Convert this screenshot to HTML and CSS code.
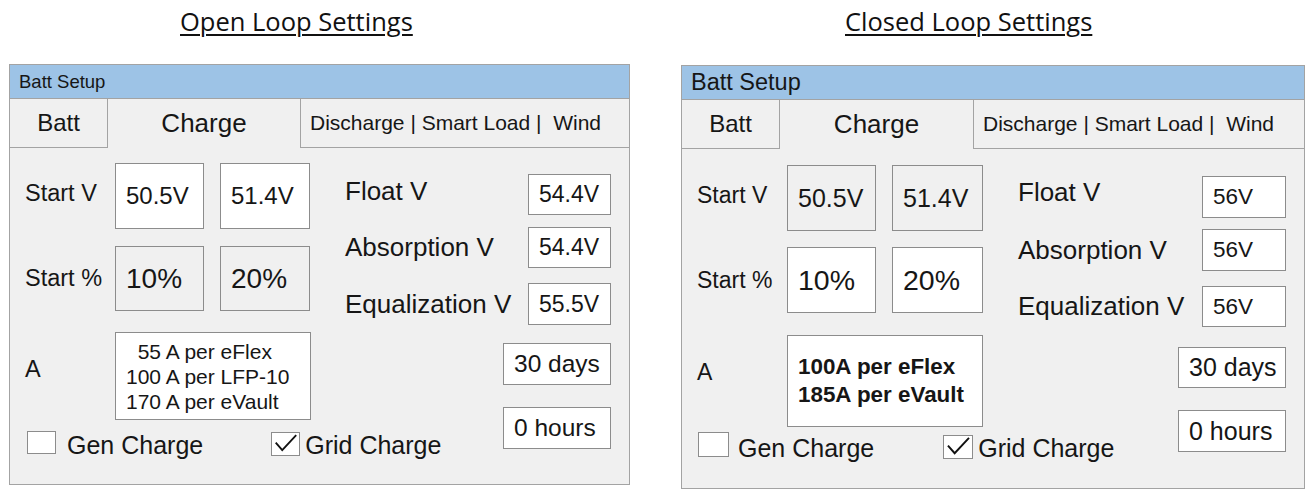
FILE: index.html
```html
<!DOCTYPE html>
<html>
<head>
<meta charset="utf-8">
<link rel="stylesheet" href="styles.css">
</head>
<body>
<div class="page">
  <section class="col open">
    <h2 class="heading">Open Loop Settings</h2>
    <div class="panel">
      <div class="titlebar">Batt Setup</div>
      <div class="tabs">
        <div class="tab tab-batt">Batt</div>
        <div class="tab tab-charge">Charge</div>
        <div class="tab tab-more">Discharge | Smart Load |  Wind</div>
      </div>
      <div class="body">
        <div class="lsec">
          <div class="row r1">
            <span class="lbl">Start V</span>
            <div class="box b1 white vtxt">50.5V</div>
            <div class="box b2 white vtxt">51.4V</div>
          </div>
          <div class="row r2">
            <span class="lbl">Start %</span>
            <div class="box b1 ptxt">10%</div>
            <div class="box b2 ptxt">20%</div>
          </div>
          <div class="row r3">
            <span class="lbl albl">A</span>
            <div class="abox">  55 A per eFlex
100 A per LFP-10
170 A per eVault</div>
          </div>
          <div class="checks">
            <span class="cb cb-gen"></span>
            <span class="ctext">Gen Charge</span>
            <span class="cb cb-grid"><svg viewBox="0 0 29 23" width="100%" height="100%"><polyline points="4,10 11,18 26,2" fill="none" stroke="#111" stroke-width="2"/></svg></span>
            <span class="ctext">Grid Charge</span>
          </div>
        </div>
        <div class="rsec">
          <div class="frow f1"><span class="flbl">Float V</span><div class="vbox">54.4V</div></div>
          <div class="frow f2"><span class="flbl">Absorption V</span><div class="vbox">54.4V</div></div>
          <div class="frow f3"><span class="flbl">Equalization V</span><div class="vbox">55.5V</div></div>
          <div class="frow f4"><div class="vbox wide">30 days</div></div>
          <div class="frow f5"><div class="vbox wide">0 hours</div></div>
        </div>
      </div>
    </div>
  </section>

  <section class="col closed">
    <h2 class="heading">Closed Loop Settings</h2>
    <div class="panel">
      <div class="titlebar">Batt Setup</div>
      <div class="tabs">
        <div class="tab tab-batt">Batt</div>
        <div class="tab tab-charge">Charge</div>
        <div class="tab tab-more">Discharge | Smart Load |  Wind</div>
      </div>
      <div class="body">
        <div class="lsec">
          <div class="row r1">
            <span class="lbl">Start V</span>
            <div class="box b1 vtxt">50.5V</div>
            <div class="box b2 vtxt">51.4V</div>
          </div>
          <div class="row r2">
            <span class="lbl">Start %</span>
            <div class="box b1 white ptxt">10%</div>
            <div class="box b2 white ptxt">20%</div>
          </div>
          <div class="row r3">
            <span class="lbl albl">A</span>
            <div class="abox">100A per eFlex
185A per eVault</div>
          </div>
          <div class="checks">
            <span class="cb cb-gen"></span>
            <span class="ctext">Gen Charge</span>
            <span class="cb cb-grid"><svg viewBox="0 0 29 23" width="100%" height="100%"><polyline points="4,10 11,18 26,2" fill="none" stroke="#111" stroke-width="2"/></svg></span>
            <span class="ctext">Grid Charge</span>
          </div>
        </div>
        <div class="rsec">
          <div class="frow f1"><span class="flbl">Float V</span><div class="vbox">56V</div></div>
          <div class="frow f2"><span class="flbl">Absorption V</span><div class="vbox">56V</div></div>
          <div class="frow f3"><span class="flbl">Equalization V</span><div class="vbox">56V</div></div>
          <div class="frow f4"><div class="vbox wide">30 days</div></div>
          <div class="frow f5"><div class="vbox wide">0 hours</div></div>
        </div>
      </div>
    </div>
  </section>
</div>
</body>
</html>
```

FILE: styles.css
```css
* { box-sizing: border-box; }

body {
  margin: 0;
  background: #ffffff;
  font-family: "Liberation Sans", Arial, sans-serif;
  color: #161616;
}

.page {
  display: flex;
  gap: 51px;
  padding-left: 9px;
}

.col.open { width: 621px; flex: none; }
.col.closed { width: 624px; flex: none; }

.heading {
  margin: 0;
  height: 64px;
  padding-top: 4px;
  font-family: "Open Sans", sans-serif;
  font-weight: 400;
  font-size: 25.5px;
  line-height: 34px;
  color: #111;
  text-decoration: underline;
  text-decoration-thickness: 2px;
  text-underline-offset: 3px;
  white-space: nowrap;
}
.open .heading { padding-left: 171px; }
.closed .heading { padding-left: 164px; height: 65px; }

.panel {
  border: 1px solid #a3a3a3;
  background: #f0f0f0;
}
.open .panel { height: 421px; }
.closed .panel { height: 424px; }

.titlebar {
  height: 34px;
  background: #9dc3e6;
  border-bottom: 1px solid #a3a3a3;
  padding-left: 9px;
  display: flex;
  align-items: center;
  white-space: nowrap;
}
.open .titlebar { font-size: 18.5px; }
.closed .titlebar { font-size: 23.5px; }

.tabs {
  display: flex;
  height: 49px;
}
.tab {
  display: flex;
  align-items: center;
  justify-content: center;
  border-bottom: 1px solid #a3a3a3;
  white-space: pre;
}
.tab-batt {
  width: 98px;
  border-right: 1px solid #a3a3a3;
  font-size: 24px;
}
.tab-charge {
  width: 192px;
  border-bottom: none;
  font-size: 26px;
}
.closed .tab-charge { width: 193px; }
.tab-more {
  flex: 1;
  border-left: 1px solid #a3a3a3;
  justify-content: flex-start;
  padding-left: 9px;
  font-size: 21px;
}

.body {
  display: flex;
  padding: 15px 0 0 15px;
}
.closed .body { padding-top: 16px; }

.lsec { width: 320px; flex: none; }
.closed .lsec { width: 321px; }
.rsec { width: 266px; flex: none; margin-top: 11px; }
.closed .rsec { width: 268px; }

.row {
  display: flex;
  align-items: center;
}
.lbl {
  width: 90px;
  flex: none;
  font-size: 23.5px;
  white-space: nowrap;
}
.closed .lbl { font-size: 23px; }
.r1 .lbl { padding-bottom: 5px; }

.box {
  height: 66px;
  border: 1px solid #8c8c8c;
  display: flex;
  align-items: center;
  padding-left: 10px;
  flex: none;
}
.box.white { background: #ffffff; }
.b1 { width: 89px; }
.b2 { width: 90px; margin-left: 16px; }
.closed .b2 { width: 91px; }
.vtxt { font-size: 24px; }
.closed .vtxt { font-size: 25px; }
.ptxt { font-size: 28px; }
.closed .ptxt { font-size: 28.5px; }

.r2 { margin-top: 17px; }
.r2 .box { height: 65px; }
.closed .r2 { margin-top: 16px; }
.closed .r2 .box { height: 66px; }
.r3 { margin-top: 21px; align-items: flex-start; }
.closed .r3 { margin-top: 22px; }
.albl { margin-top: 24px; }
.closed .albl { margin-top: 24px; }

.abox {
  width: 196px;
  height: 88px;
  border: 1px solid #8c8c8c;
  background: #ffffff;
  padding-left: 10px;
  display: flex;
  align-items: center;
  white-space: pre;
  font-size: 21px;
  line-height: 25px;
}
.closed .abox {
  height: 92px;
  font-size: 22.4px;
  line-height: 28px;
  font-weight: 700;
}

.checks {
  display: flex;
  align-items: flex-start;
  margin-top: 11px;
  font-size: 25px;
  white-space: nowrap;
}
.closed .checks { margin-top: 5px; }
.closed .ctext { margin-top: 2px; }
.cb {
  width: 29px;
  height: 23px;
  border: 1px solid #8c8c8c;
  background: #ffffff;
  flex: none;
  display: block;
}
.cb svg { display: block; }
.cb-gen { margin-left: 2px; margin-right: 11px; }
.cb-grid { margin-left: 68px; margin-right: 5px; height: 24px; margin-top: 1px; }
.closed .cb-gen { margin-left: 1px; margin-right: 9px; width: 31px; height: 25px; }
.closed .cb-grid { margin-left: 69px; margin-right: 5px; width: 30px; height: 24px; margin-top: 3px; }

.frow {
  display: flex;
  align-items: center;
  justify-content: space-between;
}
.flbl {
  font-size: 26px;
  white-space: nowrap;
}
.f1 .flbl { margin-bottom: 6px; }
.closed .f1 .flbl { margin-bottom: 10px; }

.vbox {
  width: 83px;
  height: 41px;
  border: 1px solid #8c8c8c;
  background: #ffffff;
  display: flex;
  align-items: center;
  padding-left: 10px;
  font-size: 23px;
  flex: none;
  white-space: nowrap;
}
.closed .vbox { width: 84px; height: 42px; font-size: 22.5px; }
.vbox.wide { width: 108px; margin-left: auto; font-size: 24.5px; height: 42px; }
.closed .vbox.wide { font-size: 25px; }

.f2 { margin-top: 12px; }
.f3 { margin-top: 15px; }
.f3 .vbox { height: 42px; }
.f4 { margin-top: 18px; }
.f5 { margin-top: 22px; }

.closed .f2 { margin-top: 11px; }
.closed .f3 { margin-top: 15px; }
.closed .f3 .vbox { height: 41px; }
.closed .f4 { margin-top: 20px; }
.closed .f4 .vbox { height: 41px; }
.closed .f5 { margin-top: 22px; }
```
